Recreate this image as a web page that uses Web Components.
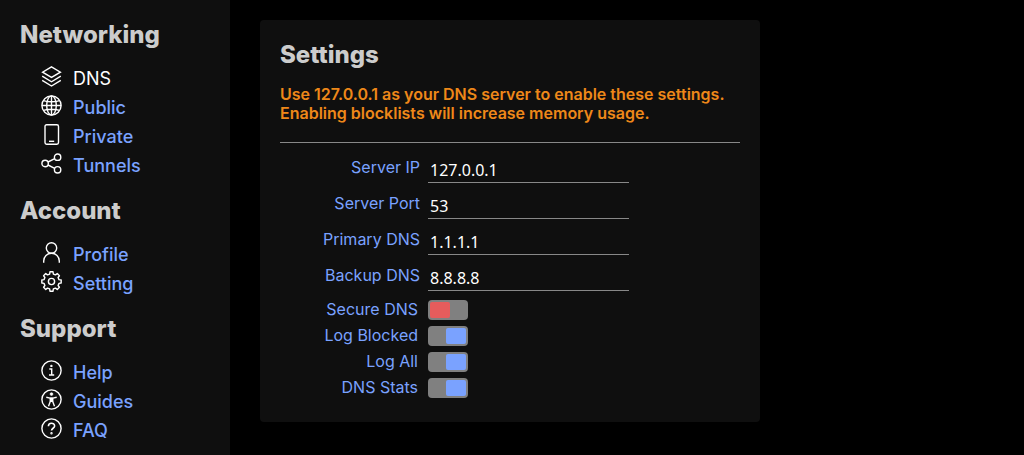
<!DOCTYPE html>
<html lang="en">
<head>
<meta charset="utf-8">
<title>DNS settings</title>
<style>
  body { margin: 0; background: #000; color: #ccc; font-family: Inter, sans-serif; font-size: 16px; }
</style>
</head>
<body>
<app-shell>
  <nav-group slot="nav" heading="Networking">
    <nav-item icon="layers" label="DNS" current></nav-item>
    <nav-item icon="globe" label="Public"></nav-item>
    <nav-item icon="device" label="Private"></nav-item>
    <nav-item icon="share" label="Tunnels"></nav-item>
  </nav-group>
  <nav-group slot="nav" heading="Account">
    <nav-item icon="person" label="Profile"></nav-item>
    <nav-item icon="gear" label="Setting"></nav-item>
  </nav-group>
  <nav-group slot="nav" heading="Support">
    <nav-item icon="info" label="Help"></nav-item>
    <nav-item icon="access" label="Guides"></nav-item>
    <nav-item icon="question" label="FAQ"></nav-item>
  </nav-group>
  <settings-card heading="Settings">
    <span slot="notice">Use 127.0.0.1 as your DNS server to enable these settings.<br>Enabling blocklists will increase memory usage.</span>
    <text-field label="Server IP" value="127.0.0.1"></text-field>
    <text-field label="Server Port" value="53"></text-field>
    <text-field label="Primary DNS" value="1.1.1.1"></text-field>
    <text-field label="Backup DNS" value="8.8.8.8"></text-field>
    <toggle-field label="Secure DNS"></toggle-field>
    <toggle-field label="Log Blocked" checked></toggle-field>
    <toggle-field label="Log All" checked></toggle-field>
    <toggle-field label="DNS Stats" checked></toggle-field>
  </settings-card>
</app-shell>
<script>
// Icons share a 21-unit box and a 1.4 stroke.
const gear = (() => {
  const pts = [];
  for (let i = 0; i < 8; i++) {
    for (const [da, r] of [[-14, 7.7], [-9, 9.8], [9, 9.8], [14, 7.7]]) {
      const a = (i * 45 + da) * Math.PI / 180;
      pts.push((10.5 + r * Math.sin(a)).toFixed(2) + ' ' + (10.5 - r * Math.cos(a)).toFixed(2));
    }
  }
  return 'M' + pts.join('L') + 'Z';
})();
const ring = '<circle cx="10.5" cy="10.5" r="9.6"/>';
const icons = {
  layers: '<path d="M10.5 .8L19.4 6.2L10.5 11.4L1.6 6.2ZM1.2 10.2L10.5 15.8L19.8 10.2M1.2 14.4L10.5 20L19.8 14.4"/>',
  globe: ring + '<ellipse cx="10.5" cy="10.5" rx="4.8" ry="9.6"/><path d="M10.5 .9V20.1M.9 10.5H20.1M2.4 5.6Q10.5 8 18.6 5.6M2.4 15.4Q10.5 13 18.6 15.4"/>',
  device: '<rect x="4" y=".8" width="13.5" height="19.4" rx="1.6"/><path d="M8 17.3H13.2"/>',
  share: '<circle cx="4.1" cy="10.5" r="3.2"/><circle cx="16.6" cy="4.2" r="3.2"/><circle cx="16.6" cy="16.8" r="3.2"/><path d="M7 9L13.7 5.7M7 12L13.7 15.3"/>',
  person: '<circle cx="10.5" cy="6" r="5.2"/><path d="M2.7 20.8V19A7.8 7.8 0 0 1 18.3 19V20.8"/>',
  gear: '<path stroke-linejoin="round" d="' + gear + '"/><circle cx="10.5" cy="10.5" r="3.1"/>',
  info: ring + '<path d="M8.3 9H10.7V14.8M8 15H13.2"/><circle cx="10.4" cy="5.9" r=".5"/>',
  access: ring + '<circle cx="10.5" cy="5.1" r="1.4" fill="currentColor" stroke-width=".6"/><path d="M5.3 8.2L9 9.1H12L15.7 8.2M9.4 9V12.2L7.5 17.2M11.6 9V12.2L13.5 17.2"/><path d="M8.8 8.6H12.2V13H8.8Z" fill="currentColor" stroke="none"/>',
  question: ring + '<path stroke-width="1.6" d="M7.4 8.3C7.4 4.3 13.6 4.3 13.6 8C13.6 10.3 10.5 10.2 10.5 12.6"/><circle cx="10.5" cy="15.3" r=".5"/>'
};

const define = (name, render) => customElements.define(name, class extends HTMLElement {
  connectedCallback() {
    if (this.shadowRoot) return;
    this.attachShadow({ mode: 'open' }).innerHTML = render(this);
  }
});

define('app-shell', () => `
  <style>
    :host { display: flex; min-height: 100vh; }
    nav { box-sizing: border-box; flex: 0 0 230px; display: flex; flex-direction: column; gap: 16px; padding: 20px 20px 10px; background: #0f0f0f; }
    main { flex: 1; min-width: 0; padding: 20px 30px; }
  </style>
  <nav><slot name="nav"></slot></nav>
  <main><slot></slot></main>`);

define('nav-group', el => `
  <style>
    :host { display: block; }
    h2 { margin: 0 0 15px; font-size: 24px; line-height: 29px; font-weight: 800; }
    div { padding-left: 20px; }
  </style>
  <h2>${el.getAttribute('heading')}</h2>
  <div><slot></slot></div>`);

define('nav-item', el => `
  <style>
    :host { display: block; color: #7aa2ff; font-weight: 500; }
    :host([current]) { color: #fff; font-weight: 400; }
    a { display: flex; align-items: flex-start; gap: 11px; height: 29px; font-size: 18px; line-height: 29px; color: inherit; text-decoration: none; }
    svg { width: 21px; height: 21px; padding: 2px 0 0 1px; color: #fff; fill: none; stroke: currentColor; stroke-width: 1.4; }
  </style>
  <a href="#${el.getAttribute('label').toLowerCase()}"><svg viewBox="0 0 21 21" aria-hidden="true">${icons[el.getAttribute('icon')]}</svg><span>${el.getAttribute('label')}</span></a>`);

define('settings-card', el => `
  <style>
    :host { display: block; box-sizing: border-box; max-width: 500px; padding: 20px; border-radius: 4px; background: #0f0f0f; }
    h2 { margin: 0 0 16px; font-size: 24px; line-height: 29px; font-weight: 800; }
    p { margin: 0; padding-bottom: 19px; border-bottom: 1px solid #888; color: #ee8819; font-weight: 600; line-height: 19px; }
    form { padding-top: 11px; }
  </style>
  <h2>${el.getAttribute('heading')}</h2>
  <p><slot name="notice"></slot></p>
  <form><slot></slot></form>`);

define('text-field', el => `
  <style>
    :host { display: flex; height: 36px; }
    label { flex: 0 0 140px; margin-right: 8px; text-align: right; line-height: 26px; color: #7aa2ff; }
    input { box-sizing: border-box; width: 201px; height: 29px; padding: 4px 2px 0; border: 0; border-bottom: 1px solid #888; border-radius: 0; outline: 0; background: none; color: #fff; font: 16px "Noto Sans", sans-serif; }
  </style>
  <label for="f">${el.getAttribute('label')}</label>
  <input id="f" type="text" value="${el.getAttribute('value')}">`);

define('toggle-field', el => `
  <style>
    :host { display: flex; height: 26px; }
    label { flex: 0 0 138px; margin-right: 10px; text-align: right; line-height: 23px; color: #7aa2ff; }
    input { appearance: none; display: flex; box-sizing: border-box; width: 40px; height: 20px; margin: 2px 0 0; padding: 2px; border-radius: 4px; background: #808080; }
    input::before { content: ""; width: 20px; border-radius: 2px; background: #e65c5c; }
    input:checked { justify-content: flex-end; }
    input:checked::before { background: #7aa2ff; }
  </style>
  <label for="f">${el.getAttribute('label')}</label>
  <input id="f" type="checkbox"${el.hasAttribute('checked') ? ' checked' : ''}>`);
</script>
</body>
</html>
